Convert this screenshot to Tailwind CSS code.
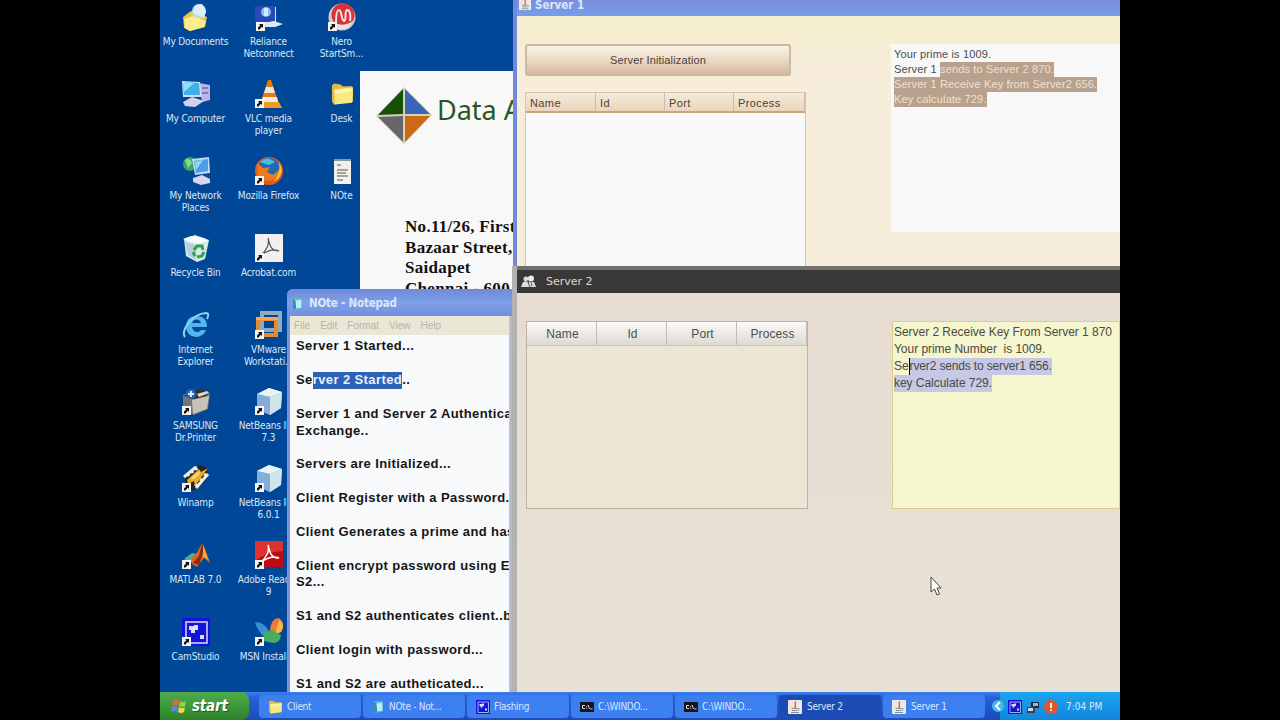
<!DOCTYPE html>
<html lang="en">
<head>
    <meta charset="UTF-8">
    <meta name="viewport" content="width=device-width, initial-scale=1.0">
    <title>Desktop</title>
    <script src="https://cdn.jsdelivr.net/npm/@tailwindcss/browser@4"></script>
</head>
<body class="bg-black">
    <!-- shared icon parts -->
    <svg class="hidden">
        <symbol id="arrow" viewBox="0 0 9 9">
            <rect width="9" height="9" fill="#f4f4f4"/>
            <path d="M2 7.5V5.5L4.3 3.2L3 2H7V6L5.8 4.8L3.5 7.5Z" fill="#111"/>
        </symbol>
        <symbol id="folder" viewBox="0 0 24 24">
            <path d="M1 3L3 1L10 2L12 4L22 4L23 7V20L3 23L1 20Z" fill="#e3b93f"/>
            <path d="M3 7L23 5L22 21L4 23Z" fill="#fbe780"/>
            <path d="M4 8L21 6.5V9L4 12Z" fill="#fff3b0"/>
        </symbol>
        <symbol id="cube" viewBox="0 0 28 28">
            <path d="M2 7L14 1L27 5L26 21L15 28L2 22Z" fill="#9fc0dc"/>
            <path d="M2 7L14 1L27 5L15 10Z" fill="#e9f4fa"/>
            <path d="M2 7L15 10V28L2 22Z" fill="#86acd8"/>
            <path d="M15 10L27 5L26 21L15 28Z" fill="#cfe3ea"/>
        </symbol>
        <symbol id="cam" viewBox="0 0 28 28">
            <rect width="28" height="28" fill="#1414d8"/>
            <rect x="4" y="4" width="21" height="21" fill="none" stroke="#cfd0ff" stroke-width="1.6"/>
            <path d="M7 8H12V7H16V12H13V15H9V12H7ZM18 17H22V21H18Z" fill="#dcdcff"/>
        </symbol>
        <symbol id="java" viewBox="0 0 14 14">
            <rect width="14" height="14" rx="1" fill="#ece9e4"/>
            <path d="M8 1.5C5 4 9.500 5 6.500 8" fill="none" stroke="#e2682a" stroke-width="1.500"/>
            <path d="M3.500 8.500H10C12 8.500 11.500 10.500 9.500 10.500M4 10.500H9M3 12.500H11" fill="none" stroke="#8b8f96"/>
        </symbol>
        <symbol id="note" viewBox="0 0 14 16">
            <path d="M2 2L12 1L13 13L3 15Z" fill="#5fc4d8"/>
            <path d="M5 4L12 3L12 12L6 13Z" fill="#bdeef2"/>
            <path d="M2 2L5 4L6 13L3 15Z" fill="#2c8fa8"/>
        </symbol>
        <symbol id="cmd" viewBox="0 0 14 10">
            <rect width="14" height="10" fill="#161616"/>
            <path d="M5 3.500H2.500V6.500H5M6.500 4V4.800M6.500 6V6.800M8 3L9.500 7M10.500 7H12.500" fill="none" stroke="#ddd"/>
        </symbol>
    </svg>

    <div class="relative mx-auto w-[960px] h-[720px] overflow-hidden bg-[#004798] font-['Liberation_Sans',Arial,sans-serif]">

        <!-- Desktop icons -->
        <div class="grid grid-cols-[73px_73px_73px] grid-rows-[repeat(9,76.9px)] w-[219px] -ml-[1px] text-center text-[10px] leading-[12px] text-[#dbe8f5] font-['DejaVu_Sans_Condensed','DejaVu_Sans',sans-serif] tracking-[-0.15px] [&>div]:flex [&>div]:flex-col [&>div]:items-center [&>div]:gap-[5px] [&>div]:pt-[3px] [&>div>svg]:w-7 [&>div>svg]:h-7 [&>div>svg]:shrink-0 [&>div>span]:whitespace-nowrap">
            <div class="row-start-1 col-start-1">
                <svg viewBox="0 0 28 28"><path d="M1 14L9 8L25 14L23 24L8 28L2 25Z" fill="#e8c548"/><circle cx="17" cy="8" r="7" fill="#b9daf0"/><path d="M11 10L14 2L20 1L24 8L22 15Z" fill="#dceefa"/><path d="M2 16L11 13L24 18L22 24L8 28L3 25Z" fill="#fbec8c"/></svg>
                <span>My Documents</span>
            </div>
            <div class="row-start-1 col-start-2">
                <svg viewBox="0 0 28 28"><path d="M2 4H21V23H2Z" fill="#dfe2ff"/><path d="M0 3H20V19H0Z" fill="#2b49b5"/><circle cx="11" cy="9" r="5" fill="#8fbbea"/><path d="M9 5H13V13H9Z" fill="#d5ecfb"/><path d="M9 20L19 18L28 21L20 24H9Z" fill="#dde8f4"/><use href="#arrow" x="1" y="19" width="9" height="9"/></svg>
                <span>Reliance<br>Netconnect</span>
            </div>
            <div class="row-start-1 col-start-3">
                <svg viewBox="0 0 28 28"><circle cx="14" cy="14" r="13.500" fill="#d5c9c9"/><circle cx="15" cy="12" r="11.500" fill="#d63438"/><path d="M8 19C8 10 9 7 11 7C14 7 13 17 16 18C19 17 16 9 19 7C22 7 23 12 22 18" fill="none" stroke="#f8dede" stroke-width="2"/><path d="M5 19Q14 25 25 18L20 25L11 27Z" fill="#eae5e5"/><use href="#arrow" y="19" width="9" height="9"/></svg>
                <span>Nero<br>StartSm...</span>
            </div>
            <div class="row-start-2 col-start-1">
                <svg viewBox="0 0 28 28"><path d="M17 3L28 5V20L20 22Z" fill="#b9b5e4"/><path d="M20 7H26V9H20ZM20 12H26V14H20Z" fill="#8077bd"/><path d="M0 1L18 2L20 17L1 17Z" fill="#cbdff1"/><path d="M1 2L17 3L18 15L2 15Z" fill="#42b0e8"/><path d="M1 2L12 3L2 12Z" fill="#94dff7"/><path d="M1 22L10 17L22 21L13 27L3 26Z" fill="#d6d0ee"/></svg>
                <span>My Computer</span>
            </div>
            <div class="row-start-2 col-start-2">
                <svg viewBox="0 0 28 28"><path d="M13 0H16L25 27H4Z" fill="#e87a12"/><path d="M11 7H18L20 13H9Z" fill="#eee9e1"/><path d="M8 17H22L23 22H6Z" fill="#f3ede5"/><path d="M3 22H24L27 28H2Z" fill="#ef9a20"/><use href="#arrow" y="19" width="9" height="9"/></svg>
                <span>VLC media<br>player</span>
            </div>
            <div class="row-start-2 col-start-3">
                <svg viewBox="0 0 28 28"><use href="#folder" x="3" y="2" width="23" height="24"/></svg>
                <span>Desk</span>
            </div>
            <div class="row-start-3 col-start-1">
                <svg viewBox="0 0 28 28"><circle cx="8" cy="7" r="7" fill="#35a864"/><path d="M3 3Q8 0 10 6L6 11Z" fill="#86dc8c"/><path d="M10 2L27 0L28 16L13 18Z" fill="#c2daf1"/><path d="M12 4L26 2L26 14L14 16Z" fill="#4c9ee5"/><path d="M13 5L21 3L14 13Z" fill="#9bd6f6"/><path d="M11 21L20 18L28 22V26L19 28L11 25Z" fill="#d9d5ee"/></svg>
                <span>My Network<br>Places</span>
            </div>
            <div class="row-start-3 col-start-2">
                <svg viewBox="0 0 28 28"><circle cx="14" cy="14" r="14" fill="#e35a18"/><circle cx="14" cy="12" r="11" fill="#2469ad"/><path d="M5 5Q12 -2 20 5L14 8L10 7Z" fill="#52b9e3"/><path d="M2 6L8 11L15 10L12 15L18 18L24 13C25 24 11 27 3 20Z" fill="#ed7921"/><path d="M24 5Q30 14 23 22L18 25Q26 17 24 5Z" fill="#f8c53b"/><use href="#arrow" y="19" width="9" height="9"/></svg>
                <span>Mozilla Firefox</span>
            </div>
            <div class="row-start-3 col-start-3">
                <svg viewBox="0 0 28 28"><path d="M6 2H23V27H6Z" fill="#f2f0e8"/><path d="M6 2H23V4H6Z" fill="#85979f"/><path d="M9 8H13M9 13H20M9 16H18M9 19H20M9 23H15" stroke="#858b8e" stroke-width="1.500"/></svg>
                <span>NOte</span>
            </div>
            <div class="row-start-4 col-start-1">
                <svg viewBox="0 0 28 28"><path d="M2 5L13 1L27 6L23 25L15 28L4 22Z" fill="#d9e9ee"/><path d="M1 5L9 2L22 4L26 7L15 10Z" fill="#f8fcfc"/><path d="M3 8L14 11L14 26L6 21Z" fill="#b5cfdd"/><path d="M12 16L15 12H20L21 16M22 18L20 22L15 23M13 22L11 18" fill="none" stroke="#2ba744" stroke-width="3"/></svg>
                <span>Recycle Bin</span>
            </div>
            <div class="row-start-4 col-start-2">
                <svg viewBox="0 0 28 28"><rect width="28" height="28" fill="#f2f1ef"/><path d="M13 4C15 12 16 17 24 17C18 14 12 17 6 21C11 17 15 10 13 4Z" fill="none" stroke="#555" stroke-width="1.200"/><use href="#arrow" y="19" width="9" height="9"/></svg>
                <span>Acrobat.com</span>
            </div>
            <div class="row-start-5 col-start-1">
                <svg viewBox="0 0 28 28"><path d="M24 19Q21 26 14 26Q4 25 4 15Q5 5 14 5Q25 5 25 16H10Q11 21 15 21Q18 21 19 19Z" fill="#52b7ec"/><path d="M10 12Q11 8.500 14.500 8.500Q18 8.500 19 12Z" fill="#004798"/><path d="M3 26C-2 20 10 3 24 2Q28 2 25 8" fill="none" stroke="#8dd3f1" stroke-width="2"/></svg>
                <span>Internet<br>Explorer</span>
            </div>
            <div class="row-start-5 col-start-2">
                <svg viewBox="0 0 28 28"><rect x="7" y="2" width="18" height="17" fill="none" stroke="#8eabc1" stroke-width="4"/><rect x="3" y="8" width="18" height="16" fill="none" stroke="#e58a30" stroke-width="4"/><path d="M1 6H23V9H1Z" fill="#f4a85a"/><use href="#arrow" y="19" width="9" height="9"/></svg>
                <span>VMware<br>Workstati...</span>
            </div>
            <div class="row-start-6 col-start-1">
                <svg viewBox="0 0 28 28"><path d="M1 8L14 2L28 6L26 22L12 28L1 24Z" fill="#777572"/><path d="M10 13L27 9L25 22L11 27Z" fill="#c8c2b9"/><path d="M2 9L15 2L28 5L24 9L12 12Z" fill="#332f2e"/><path d="M15 7L25 4L27 6L17 10Z" fill="#ded9cf"/><circle cx="9" cy="7" r="5" fill="#2862be"/><path d="M6 7H12M9 4V10" stroke="#d6edfb" stroke-width="2"/><use href="#arrow" y="19" width="9" height="9"/></svg>
                <span>SAMSUNG<br>Dr.Printer</span>
            </div>
            <div class="row-start-6 col-start-2">
                <svg viewBox="0 0 28 28"><use href="#cube" width="28" height="28"/><use href="#arrow" y="19" width="9" height="9"/></svg>
                <span>NetBeans IDE<br>7.3</span>
            </div>
            <div class="row-start-7 col-start-1">
                <svg viewBox="0 0 28 28"><path d="M3 12L18 1L26 4L24 17L11 27L3 22Z" fill="#262525"/><path d="M2 13L14 3M5 9L7 12M9 6L11 9M13 3L15 6M26 10L14 24M25 12L22 10M21 17L18 15M16 22L13 20" stroke="#efede1" stroke-width="3"/><path d="M5 16L17 5L19 8L26 4L13 22L12 17L6 20Z" fill="#edaa23"/><path d="M8 15L17 7L18 10L12 15Z" fill="#fbd66b"/><use href="#arrow" y="19" width="9" height="9"/></svg>
                <span>Winamp</span>
            </div>
            <div class="row-start-7 col-start-2">
                <svg viewBox="0 0 28 28"><use href="#cube" width="28" height="28"/><use href="#arrow" y="19" width="9" height="9"/></svg>
                <span>NetBeans IDE<br>6.0.1</span>
            </div>
            <div class="row-start-8 col-start-1">
                <svg viewBox="0 0 28 28"><path d="M2 18L10 12L15 13L9 22Z" fill="#57aaa4"/><path d="M10 17Q15 13 20 2L23 8L28 22L22 17L15 26L10 23Z" fill="#dc681a"/><path d="M20 2L22 9L17 24L11 22L17 15Z" fill="#8e281a"/><path d="M21 4L27 20L23 16L21 17Z" fill="#f5ab35"/><use href="#arrow" y="19" width="9" height="9"/></svg>
                <span>MATLAB 7.0</span>
            </div>
            <div class="row-start-8 col-start-2">
                <svg viewBox="0 0 28 28"><rect width="28" height="26" fill="#bd0d12"/><path d="M0 0H28V10Q13 10 0 20Z" fill="#dc3330"/><path d="M13 4C15 12 16 17 24 17C18 14 12 17 6 21C11 17 15 10 13 4Z" fill="none" stroke="#fff" stroke-width="1.500"/><use href="#arrow" y="19" width="9" height="9"/></svg>
                <span>Adobe Reader<br>9</span>
            </div>
            <div class="row-start-9 col-start-1">
                <svg viewBox="0 0 28 28"><use href="#cam" width="28" height="28"/><use href="#arrow" y="19" width="9" height="9"/></svg>
                <span>CamStudio</span>
            </div>
            <div class="row-start-9 col-start-2">
                <svg viewBox="0 0 28 28"><path d="M0 4Q9 4 14 13L9 19Q2 12 0 4Z" fill="#398fd2"/><path d="M15 12Q16 0 24 0Q31 5 26 14L16 18Z" fill="#ed7b3d"/><path d="M24 2Q31 6 26 14L20 17Z" fill="#f8ba45"/><path d="M9 15L17 12L26 17Q25 25 18 25L9 23Z" fill="#48ae5f"/><use href="#arrow" y="19" width="9" height="9"/></svg>
                <span>MSN Installer</span>
            </div>
        </div>

        <!-- Letterhead document -->
        <div class="absolute left-[200px] top-[71px] w-[160px] h-[230px] bg-[#f8f8f9] overflow-hidden whitespace-nowrap">
            <div class="flex items-start pt-[15px] pl-[15px] text-[#29561f]">
                <svg class="w-[58px] h-[60px] shrink-0" viewBox="0 0 58 60">
                    <path d="M29 1L57 29L29 58L1 30Z" fill="#d5d2b8"/>
                    <path d="M28 3V28L3 29Z" fill="#195008"/>
                    <path d="M30 3L55 28H30Z" fill="#3b66b7"/>
                    <path d="M3 31L28 30V56Z" fill="#666568"/>
                    <path d="M30 30H55L30 56Z" fill="#cb6915"/>
                </svg>
                <span class="pl-[4px] pt-[6px] text-[27px] leading-9 font-['Noto_Sans','Open_Sans',sans-serif]">Data Al</span>
            </div>
            <div class="pl-[45px] pt-[71px] font-['Liberation_Serif',serif] font-bold text-[17px] leading-[20.7px] tracking-[0.3px] text-[#111]">
                No.11/26, First<br>Bazaar Street,<br>Saidapet<br>Chennai - 600
            </div>
        </div>

        <!-- Notepad -->
        <div class="absolute left-[127px] top-[289px] w-[228px] h-[404px] flex flex-col bg-[#7b93dc] pl-[3px] pr-[5px] rounded-tl-md overflow-hidden whitespace-nowrap">
            <div class="h-[27px] shrink-0 flex items-center gap-[5px] pl-[3px] pt-[3px] -mx-[3px] bg-linear-to-b from-[#7089d8] via-[#7da0ea] to-[#7290de] text-[#dce6fb]">
                <svg class="w-3 h-4 ml-[1px]"><use href="#note"/></svg>
                <span class="pl-[1px] text-[11.5px] font-bold tracking-[-0.2px] font-['DejaVu_Sans_Condensed',sans-serif]">NOte - Notepad</span>
            </div>
            <div class="h-[19px] shrink-0 flex items-center gap-[10px] pl-[4px] bg-[#eae7d6] text-[10px] text-[#b8b5a5]">
                <span>File</span><span>Edit</span><span>Format</span><span>View</span><span>Help</span>
            </div>
            <div class="grow overflow-hidden bg-[#f8f9fb] pl-[6px] pt-[3px] text-[13px] font-bold leading-[16.87px] tracking-[0.4px] text-[#151515]">
                Server 1 Started...<br><br>
                Se<span class="bg-[#2c62b8] text-[#e8f0fa] inline-block h-[17px]">rver 2 Started</span>..<br><br>
                Server 1 and Server 2 Authentication<br>Exchange..<br><br>
                Servers are Initialized...<br><br>
                Client Register with a Password...<br><br>
                Client Generates a prime and hash<br><br>
                Client encrypt password using ECC<br>S2...<br><br>
                S1 and S2 authenticates client..by<br><br>
                Client login with password...<br><br>
                S1 and S2 are autheticated...
            </div>
        </div>
        <div class="absolute left-[349px] top-[316px] w-[6px] h-[376px] bg-linear-to-r from-[#c4c6cf] to-[#96a1c9]"></div>

        <!-- Server 1 -->
        <div class="absolute left-[353px] top-0 w-[607px] h-[267px] flex flex-col border-l-[4px] border-[#7189d8] bg-[#f6edd7] overflow-hidden whitespace-nowrap">
            <div class="h-[16px] shrink-0 flex items-center gap-[4px] pl-[3px] -ml-[1px] bg-linear-to-b from-[#7a8fdb] to-[#769dea]">
                <svg class="w-3 h-3 -mt-[8px]"><use href="#java"/></svg>
                <span class="-mt-[5px] text-[11.5px] font-bold text-[#dce6fb] font-['DejaVu_Sans_Condensed',sans-serif]">Server 1</span>
            </div>
            <div class="grow flex items-start pl-[8px] bg-linear-to-b from-[#f5efcd] to-[#f7eddb] to-20%">
                <div class="w-[281px] pt-[28px] flex flex-col gap-[16px]">
                    <div class="w-[266px] h-[32px] flex items-center justify-center rounded-[3px] border-2 border-[#cbb9a1] bg-linear-to-b from-[#faf4e6] via-[#ead9c6] to-[#d5b89e] text-[11px] tracking-[0.15px] text-[#4c4237]">Server Initialization</div>
                    <div class="w-[281px] h-[180px] border border-[#d4c3ad] bg-[#f9f9fa]">
                        <div class="h-[20px] grid grid-cols-[70px_69px_69px_71px] items-center bg-linear-to-b from-[#f4ebda] to-[#ead5bb] border-b-2 border-[#c9a582] text-[11px] tracking-[0.4px] text-[#4c4237] [&>span]:pl-[4px] [&>span]:leading-[19px] [&>span]:pt-[1px] [&>span]:h-[18px] [&>span]:border-r [&>span]:border-[#cdbda7]">
                            <span>Name</span><span>Id</span><span>Port</span><span>Process</span>
                        </div>
                    </div>
                </div>
                <div class="ml-[85px] mt-[28px] w-[240px] h-[188px] bg-[#f8f8f9] pl-[3px] pt-[3px] text-[11px] leading-[15px] tracking-[0.15px] text-[#4b4b4b]">
                    <div>Your prime is 1009.</div>
                    <div>Server 1 <span class="bg-[#b9a28d] text-[#eee0d0] inline-block h-[15px]">sends to Server 2 870.</span></div>
                    <div><span class="bg-[#b9a28d] text-[#eee0d0] inline-block h-[15px]">Server 1 Receive Key from Server2 656.</span></div>
                    <div><span class="bg-[#b9a28d] text-[#eee0d0] inline-block h-[15px]">Key calculate 729.</span></div>
                </div>
            </div>
        </div>

        <!-- Server 2 -->
        <div class="absolute left-[352px] top-[266px] w-[608px] h-[427px] flex flex-col border-l-[5px] border-[#b4b2b0] bg-[#e8e0d5] overflow-hidden whitespace-nowrap">
            <div class="h-[27px] shrink-0 flex items-center gap-[10px] pl-[5px] pt-[5px] -ml-[1px] border-t-[4px] border-[#72706d] bg-[#393837] text-[#d8d8d8]">
                <svg class="w-[15px] h-[13px] -mt-[5px]" viewBox="0 0 15 13"><circle cx="5" cy="4" r="2.500" fill="#ddd"/><circle cx="10" cy="3.500" r="3" fill="#eee"/><path d="M0 12L2 7L7 6L8 12ZM7 12L8 7H13L15 12Z" fill="#ddd"/><path d="M6 5L9 12M10 7L11 11" stroke="#555"/></svg>
                <span class="-mt-[3px] text-[11px] font-['DejaVu_Sans',sans-serif]">Server 2</span>
            </div>
            <div class="grow flex items-start pl-[9px] pt-[28px] bg-linear-to-b from-[#e6dcd2] to-[#e8e2d6]">
                <div class="w-[282px] h-[188px] border border-[#b9b4a8] bg-[#ece6d5]">
                    <div class="h-[24px] grid grid-cols-[70px_70px_70px_70px] text-center leading-[25px] bg-linear-to-b from-[#fbfaf8] to-[#dcdad3] border-b border-[#c8c4b8] text-[12px] tracking-[0.1px] text-[#4f4e4b] [&>span]:h-[23px] [&>span]:pl-[2px] [&>span]:border-r [&>span]:border-[#c0bdb4]">
                        <span>Name</span><span>Id</span><span>Port</span><span>Process</span>
                    </div>
                </div>
                <div class="ml-[84px] w-[240px] h-[188px] border border-[#dacb8e] bg-[#f5f5ce] pl-[1px] pt-[2px] text-[12px] leading-[17px] tracking-[-0.04px] text-[#4b4b42]">
                    <div>Server 2 Receive Key From Server 1 870</div>
                    <div>Your prime Number &nbsp;is 1009.</div>
                    <div class="flex">Se<span class="bg-[#c6c8e5] border-l border-black h-[17px] tracking-[-0.15px]">rver2 sends to server1 656.</span></div>
                    <div class="flex"><span class="bg-[#c6c8e5] h-[17px]">key Calculate 729.</span></div>
                </div>
            </div>
        </div>

        <!-- Taskbar -->
        <div class="absolute left-0 bottom-0 w-[960px] h-[28px] flex bg-linear-to-b from-[#3b80ee] via-[#2860d8] via-20% to-[#1d4bb7] text-[10px] text-[#d9e8fc] font-['DejaVu_Sans_Condensed',sans-serif] tracking-[-0.3px] whitespace-nowrap">
            <div class="w-[89px] flex items-center gap-[5px] pl-[11px] rounded-r-lg bg-linear-to-b from-[#4fa94f] via-[#3d9b3b] to-[#2e802c] text-white">
                <svg class="w-[16px] h-[17px]" viewBox="0 0 16 17"><path d="M2 3Q5 1 8 3L7 8Q4 6 1 8Z" fill="#ea6632"/><path d="M9 3Q12 5 15 3L14 8Q11 10 8 8Z" fill="#8dd34b"/><path d="M1 9Q4 7 7 9L6 14Q3 12 0 14Z" fill="#5289e6"/><path d="M8 9Q11 11 14 9L13 14Q10 16 7 14Z" fill="#f7d34e"/></svg>
                <span class="text-[15px] font-bold italic tracking-[-0.2px] [text-shadow:1px_1px_1px_#245c20]">start</span>
            </div>
            <div class="grow grid grid-cols-[repeat(7,102px)] gap-[2px] pl-[10px] pt-[3px] pb-[2px] [&>div]:flex [&>div]:items-center [&>div]:gap-[6px] [&>div]:pl-[9px] [&>div]:rounded-sm [&>div]:overflow-hidden [&_svg]:shrink-0">
                <div class="bg-[#3c7ff0]"><svg class="w-[15px] h-[14px]"><use href="#folder"/></svg><span class="-ml-[2px]">Client</span></div>
                <div class="bg-[#3c7ff0]"><svg class="w-[12px] h-[14px]"><use href="#note"/></svg><span class="-ml-[1px]">NOte - Not...</span></div>
                <div class="bg-[#3c7ff0]"><svg class="w-[14px] h-[14px]"><use href="#cam"/></svg><span class="-ml-[2px]">Flashing</span></div>
                <div class="bg-[#3c7ff0]"><svg class="w-[14px] h-[10px]"><use href="#cmd"/></svg><span class="-ml-[2px]">C:\WINDO...</span></div>
                <div class="bg-[#3c7ff0]"><svg class="w-[14px] h-[10px]"><use href="#cmd"/></svg><span class="-ml-[2px]">C:\WINDO...</span></div>
                <div class="bg-[#1c4bb3]"><svg class="w-[14px] h-[14px]"><use href="#java"/></svg><span class="-ml-[1px]">Server 2</span></div>
                <div class="bg-[#3c7ff0]"><svg class="w-[14px] h-[14px]"><use href="#java"/></svg><span class="-ml-[1px]">Server 1</span></div>
            </div>
            <div class="relative w-[120px] shrink-0 flex items-center gap-[4px] pl-[8px] pt-[1px] bg-linear-to-b from-[#1ba4ef] to-[#1187db]">
                <svg class="absolute -left-[8px] top-[8px] w-[12px] h-[12px]" viewBox="0 0 12 12"><circle cx="6" cy="6" r="6" fill="#49b4ea"/><path d="M8 2L4 6L8 10" fill="none" stroke="#fff" stroke-width="2"/></svg>
                <svg class="w-[14px] h-[14px]"><use href="#cam"/></svg>
                <svg class="w-[14px] h-[14px]" viewBox="0 0 14 14"><path d="M5 2H13V8H5Z" fill="#242936"/><path d="M7 3H12V6H7Z" fill="#a4b8cb"/><path d="M1 7H9V13H1Z" fill="#393f4e"/><path d="M2 8H7V11H2Z" fill="#d5dce3"/></svg>
                <svg class="w-[14px] h-[14px]" viewBox="0 0 14 14"><circle cx="7" cy="7" r="7" fill="#e3562b"/><path d="M7 3V8M7 9.500V11" stroke="#fff" stroke-width="2"/></svg>
                <span class="pl-[4px] tracking-normal">7:04 PM</span>
            </div>
        </div>

        <!-- Mouse pointer -->
        <svg class="absolute left-[770px] top-[576px] w-[12px] h-[20px]" viewBox="0 0 12 20"><path d="M1 1V16L4.500 13L7 19L9.500 18L7 12H11Z" fill="#fff" stroke="#444"/></svg>
    </div>
</body>
</html>
